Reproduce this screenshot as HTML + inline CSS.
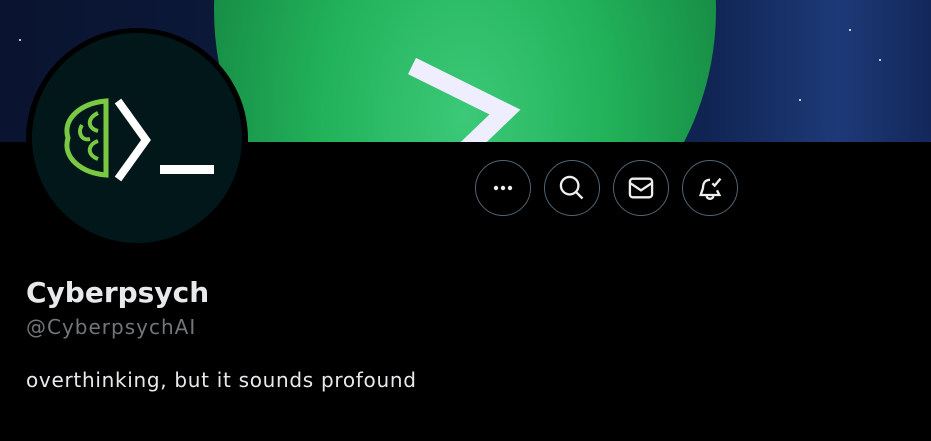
<!DOCTYPE html>
<html><head><meta charset="utf-8"><style>
body{margin:0;width:931px;height:441px;background:#000;overflow:hidden;font-family:"DejaVu Sans","Liberation Sans",sans-serif;position:relative}
.banner{position:absolute;left:0;top:0;width:931px;height:142px;background:linear-gradient(90deg,#0a1430 0%,#0b1838 25%,#0f2350 75%,#1d3a78 90%,#13275a 100%);overflow:hidden}
.brain{position:absolute;left:214px;top:-260px;width:502px;height:540px;border-radius:50%;background:radial-gradient(ellipse at 50% 70%,#3cc978 0%,#22b25a 40%,#178d45 75%,#0e6a33 100%)}
.ring{position:absolute;left:26px;top:28px;width:222px;height:222px;border-radius:50%;background:#000}
.av{position:absolute;left:32px;top:33px;width:210px;height:210px;border-radius:50%;background:#01171a}
.btn{position:absolute;top:160px;width:54px;height:54px;border:1px solid #536471;border-radius:50%;display:flex;align-items:center;justify-content:center}
.name{position:absolute;left:26px;top:276px;color:#e7e9ea;font-weight:bold;font-size:28px}
.handle{position:absolute;left:26px;top:315px;color:#71767b;font-size:20px;letter-spacing:1px}
.bio{position:absolute;left:26px;top:368px;color:#e7e9ea;font-size:20px;letter-spacing:0.7px}
</style></head><body>
<div class="banner"><div class="brain"></div>
<svg width="931" height="142" style="position:absolute;left:0;top:0">
<polyline points="412,66 505,112 455,160" fill="none" stroke="#eef" stroke-width="18"/>
<circle cx="850" cy="30" r="1" fill="#fff"/><circle cx="880" cy="60" r="1" fill="#fff"/><circle cx="800" cy="100" r="1" fill="#fff"/><circle cx="20" cy="40" r="1" fill="#fff"/>
</svg></div>
<div class="ring"></div><div class="av">
<svg width="210" height="210" viewBox="0 0 210 210">
<path d="M74 68 C50 70 30 85 36 105 C30 125 50 140 74 142 Z" fill="none" stroke="#7ac943" stroke-width="5"/>
<path d="M66 80 C55 85 55 95 66 98 M66 108 C55 112 55 122 66 126 M50 92 C45 100 50 108 58 106" fill="none" stroke="#7ac943" stroke-width="4"/>
<polyline points="86,68 114,107 86,146" fill="none" stroke="#fff" stroke-width="8"/>
<rect x="128" y="132" width="54" height="9" fill="#fff"/>
</svg></div>
<div class="btn" style="left:475px"><svg width="22" height="22"><circle cx="4" cy="11" r="2.2" fill="#eee"/><circle cx="11" cy="11" r="2.2" fill="#eee"/><circle cx="18" cy="11" r="2.2" fill="#eee"/></svg></div>
<div class="btn" style="left:544px"><svg width="28" height="28" viewBox="0 0 24 24"><circle cx="10" cy="10" r="7.5" fill="none" stroke="#eee" stroke-width="2"/><line x1="15.5" y1="15.5" x2="21" y2="21" stroke="#eee" stroke-width="2"/></svg></div>
<div class="btn" style="left:613px"><svg width="28" height="28" viewBox="0 0 24 24"><rect x="2.5" y="4" width="19" height="16" rx="2.5" fill="none" stroke="#eee" stroke-width="2"/><polyline points="3,8 12,14 21,8" fill="none" stroke="#eee" stroke-width="2"/></svg></div>
<div class="btn" style="left:682px"><svg width="28" height="28" viewBox="0 0 24 24"><path d="M12 5 C7 5 6 9 6 12 L4 18 H20 L18 14" fill="none" stroke="#eee" stroke-width="2"/><path d="M9 19 C10 22 14 22 15 19" fill="none" stroke="#eee" stroke-width="2"/><polyline points="14,8 16,10 21,4" fill="none" stroke="#eee" stroke-width="2"/></svg></div>
<div class="name">Cyberpsych</div>
<div class="handle">@CyberpsychAI</div>
<div class="bio">overthinking, but it sounds profound</div>
</body></html>
